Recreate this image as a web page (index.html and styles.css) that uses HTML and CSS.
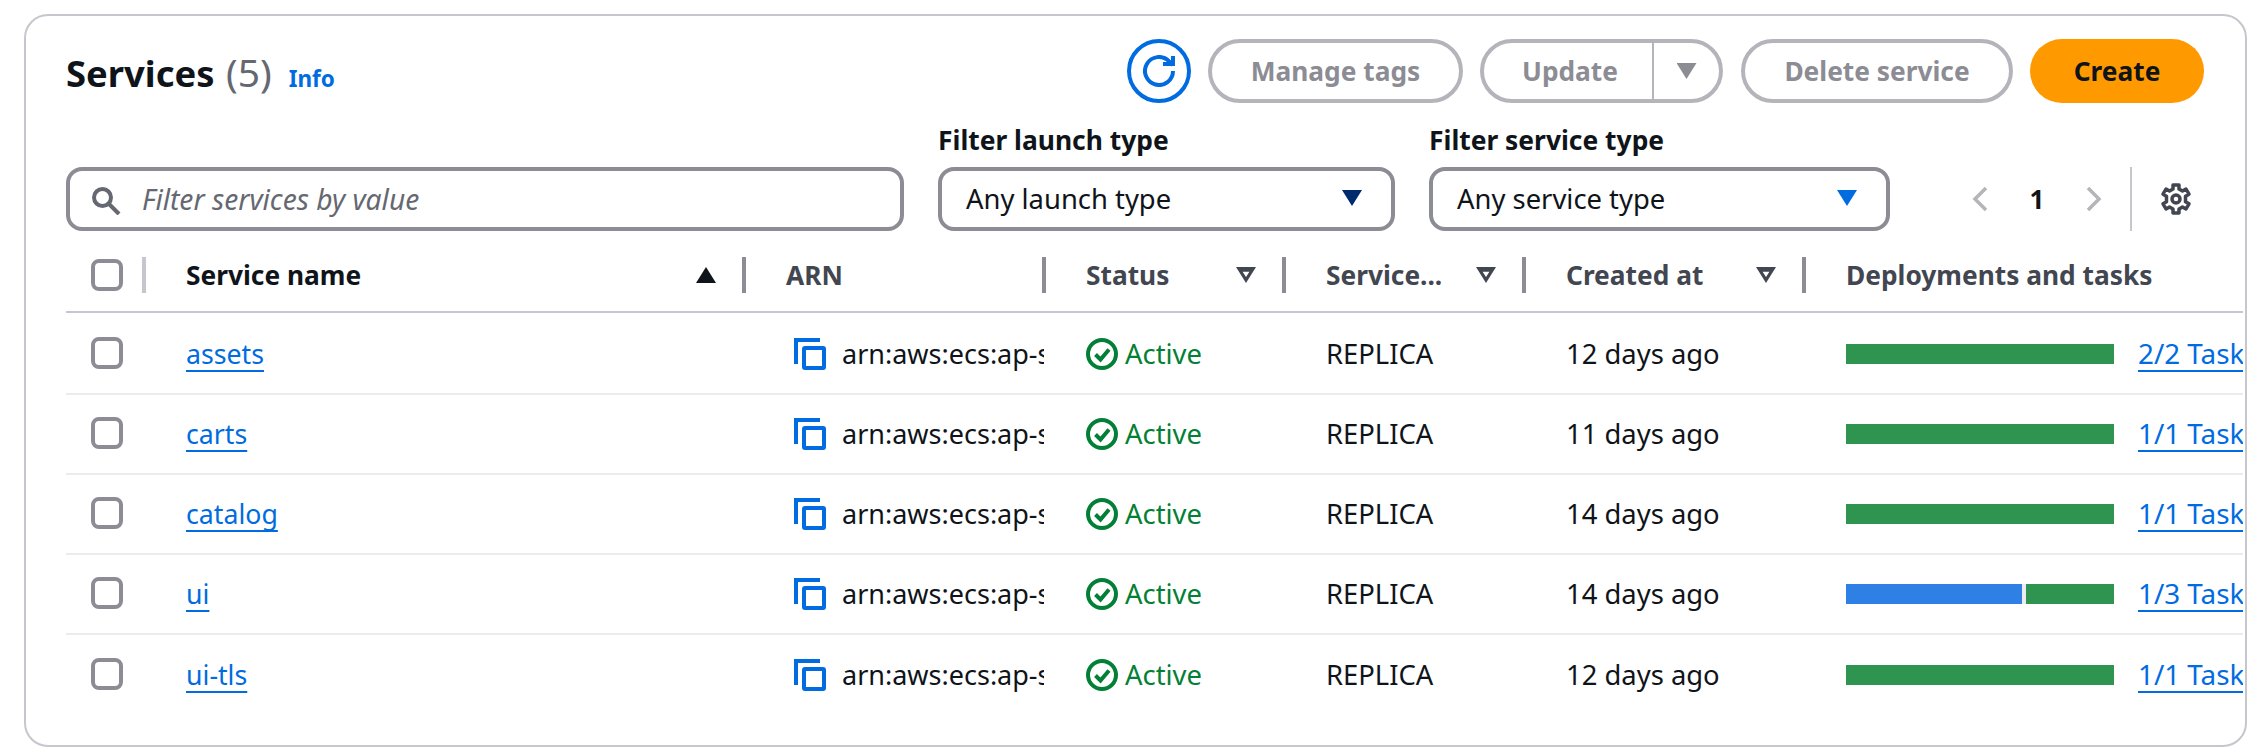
FILE: index.html
```html
<!DOCTYPE html>
<html lang="en">
<head>
<meta charset="utf-8">
<title>Services</title>
<link rel="stylesheet" href="styles.css">
</head>
<body>
<main class="card">
  <header class="top">
    <div class="title"><h1>Services <span class="count">(5)</span></h1><a class="info">Info</a></div>
    <div class="actions">
      <button class="refresh" aria-label="Refresh"><svg viewBox="0 0 32 32" width="32" height="32"><path d="M20 9h10V1M30 16a14 14 0 1 1-4.100-9.900L30 10"/></svg></button>
      <button class="btn btn-tags">Manage tags</button>
      <div class="split"><button class="split-main">Update</button><button class="split-caret"><span class="tri-down grey"></span></button></div>
      <button class="btn btn-delete">Delete service</button>
      <button class="create">Create</button>
    </div>
  </header>
  <section class="filters">
    <div class="search">
      <svg viewBox="0 0 32 32" width="32" height="32"><circle cx="12.500" cy="14.500" r="8.500"/><path d="M19 21l10 10"/></svg>
      <span>Filter services by value</span>
    </div>
    <div class="field launch"><label>Filter launch type</label><div class="select"><span>Any launch type</span><span class="tri-down navy"></span></div></div>
    <div class="field service"><label>Filter service type</label><div class="select"><span>Any service type</span><span class="tri-down blue"></span></div></div>
    <div class="pager">
      <svg class="chev" viewBox="0 0 18 26" width="18" height="26"><path d="M15 2L4 13l11 11"/></svg>
      <span class="page">1</span>
      <svg class="chev" viewBox="0 0 18 26" width="18" height="26"><path d="M3 2l11 11L3 24"/></svg>
      <span class="pager-sep"></span>
      <svg class="gear" viewBox="0 0 32 32" width="32" height="32"><circle cx="16" cy="16" r="4"/><path d="M13 2h6v4l3.500 2 3.500-2 3 5.200-3.500 2v5.600l3.500 2-3 5.200-3.500-2-3.500 2v4h-6v-4l-3.500-2-3.500 2-3-5.200 3.500-2v-5.600l-3.500-2L6 6l3.500 2L13 6z"/></svg>
    </div>
  </section>
  <div class="table">
    <div class="row head">
      <div class="cell c1"><span class="check"></span></div>
      <div class="cell c2"><span class="h-dark">Service name</span><span class="tri-up"></span></div>
      <div class="cell c3"><span>ARN</span></div>
      <div class="cell c4"><span>Status</span><span class="tri-outline"></span></div>
      <div class="cell c5"><span>Service...</span><span class="tri-outline"></span></div>
      <div class="cell c6"><span>Created at</span><span class="tri-outline"></span></div>
      <div class="cell c7"><span>Deployments and tasks</span></div>
    </div>
    <div class="row">
      <div class="cell c1"><span class="check"></span></div>
      <div class="cell c2"><a class="link">assets</a></div>
      <div class="cell c3"><svg class="copy" viewBox="0 0 32 32" width="32" height="32"><path d="M2 26V2h24"/><rect x="10" y="10" width="20" height="20" rx="1"/></svg><span class="arn">arn:aws:ecs:ap-southeast-1</span></div>
      <div class="cell c4"><svg class="ok" viewBox="0 0 32 32" width="32" height="32"><circle cx="16" cy="16" r="14"/><path d="M9.500 16.500l5 5 8.500-10"/></svg><span class="active">Active</span></div>
      <div class="cell c5">REPLICA</div>
      <div class="cell c6">12 days ago</div>
      <div class="cell c7"><div class="bar"><i class="seg-green" style="width:100%"></i></div><a class="link">2/2 Tasks running</a></div>
    </div>
    <div class="row">
      <div class="cell c1"><span class="check"></span></div>
      <div class="cell c2"><a class="link">carts</a></div>
      <div class="cell c3"><svg class="copy" viewBox="0 0 32 32" width="32" height="32"><path d="M2 26V2h24"/><rect x="10" y="10" width="20" height="20" rx="1"/></svg><span class="arn">arn:aws:ecs:ap-southeast-1</span></div>
      <div class="cell c4"><svg class="ok" viewBox="0 0 32 32" width="32" height="32"><circle cx="16" cy="16" r="14"/><path d="M9.500 16.500l5 5 8.500-10"/></svg><span class="active">Active</span></div>
      <div class="cell c5">REPLICA</div>
      <div class="cell c6">11 days ago</div>
      <div class="cell c7"><div class="bar"><i class="seg-green" style="width:100%"></i></div><a class="link">1/1 Tasks running</a></div>
    </div>
    <div class="row">
      <div class="cell c1"><span class="check"></span></div>
      <div class="cell c2"><a class="link">catalog</a></div>
      <div class="cell c3"><svg class="copy" viewBox="0 0 32 32" width="32" height="32"><path d="M2 26V2h24"/><rect x="10" y="10" width="20" height="20" rx="1"/></svg><span class="arn">arn:aws:ecs:ap-southeast-1</span></div>
      <div class="cell c4"><svg class="ok" viewBox="0 0 32 32" width="32" height="32"><circle cx="16" cy="16" r="14"/><path d="M9.500 16.500l5 5 8.500-10"/></svg><span class="active">Active</span></div>
      <div class="cell c5">REPLICA</div>
      <div class="cell c6">14 days ago</div>
      <div class="cell c7"><div class="bar"><i class="seg-green" style="width:100%"></i></div><a class="link">1/1 Tasks running</a></div>
    </div>
    <div class="row">
      <div class="cell c1"><span class="check"></span></div>
      <div class="cell c2"><a class="link">ui</a></div>
      <div class="cell c3"><svg class="copy" viewBox="0 0 32 32" width="32" height="32"><path d="M2 26V2h24"/><rect x="10" y="10" width="20" height="20" rx="1"/></svg><span class="arn">arn:aws:ecs:ap-southeast-1</span></div>
      <div class="cell c4"><svg class="ok" viewBox="0 0 32 32" width="32" height="32"><circle cx="16" cy="16" r="14"/><path d="M9.500 16.500l5 5 8.500-10"/></svg><span class="active">Active</span></div>
      <div class="cell c5">REPLICA</div>
      <div class="cell c6">14 days ago</div>
      <div class="cell c7"><div class="bar"><i class="seg-blue" style="width:176px"></i><i class="seg-gap"></i><i class="seg-green" style="width:88px"></i></div><a class="link">1/3 Tasks running</a></div>
    </div>
    <div class="row last">
      <div class="cell c1"><span class="check"></span></div>
      <div class="cell c2"><a class="link">ui-tls</a></div>
      <div class="cell c3"><svg class="copy" viewBox="0 0 32 32" width="32" height="32"><path d="M2 26V2h24"/><rect x="10" y="10" width="20" height="20" rx="1"/></svg><span class="arn">arn:aws:ecs:ap-southeast-1</span></div>
      <div class="cell c4"><svg class="ok" viewBox="0 0 32 32" width="32" height="32"><circle cx="16" cy="16" r="14"/><path d="M9.500 16.500l5 5 8.500-10"/></svg><span class="active">Active</span></div>
      <div class="cell c5">REPLICA</div>
      <div class="cell c6">12 days ago</div>
      <div class="cell c7"><div class="bar"><i class="seg-green" style="width:100%"></i></div><a class="link">1/1 Tasks running</a></div>
    </div>
  </div>
</main>
</body>
</html>
```
FILE: styles.css
```css
* { box-sizing: border-box; }
html, body { margin: 0; background: #fff; }
body { width: 2262px; height: 756px; overflow: hidden; font-family: "Noto Sans", sans-serif; font-size: 27.4px; color: #0f141a; }
.card { margin: 14px 0 0 24px; width: 2223px; height: 733px; border: 2px solid #c6c6cd; border-radius: 24px; padding: 23px 2px 0 40px; overflow: hidden; }
.top { display: flex; justify-content: space-between; align-items: center; height: 64px; padding-right: 39px; }
.title { display: flex; align-items: baseline; gap: 17px; padding-top: 2px; }
h1 { margin: 0; font-size: 36.4px; font-weight: 700; line-height: 44px; word-spacing: 2px; }
.count { font-weight: 400; font-size: 39px; color: #656871; }
.info { font-size: 22.5px; font-weight: 700; color: #006ce0; }
.actions { display: flex; align-items: center; }
button { font: inherit; font-size: 26.3px; font-weight: 700; background: #fff; padding: 0; }
.refresh { width: 64px; height: 64px; border-radius: 50%; border: 4px solid #006ce0; display: flex; align-items: center; justify-content: center; margin-right: 17px; }
.refresh path { fill: none; stroke: #006ce0; stroke-width: 4; }
.btn { height: 64px; border: 4px solid #b4b4bb; border-radius: 32px; color: #8c8c94; }
.btn-tags { width: 255px; margin-right: 17px; }
.btn-delete { width: 272px; margin-right: 17px; }
.split { display: flex; width: 243px; height: 64px; border: 4px solid #b4b4bb; border-radius: 32px; margin-right: 18px; }
.split-main { width: 170px; border: 0; border-right: 2px solid #b4b4bb; background: none; color: #8c8c94; padding-left: 4px; }
.split-caret { flex: 1; border: 0; background: none; display: flex; align-items: center; justify-content: center; }
.create { width: 174px; height: 64px; border: 0; border-radius: 32px; background: #ff9900; color: #0f141a; }
.filters { display: flex; align-items: flex-end; margin-top: 19px; }
.search { width: 838px; height: 64px; border: 4px solid #8c8c94; border-radius: 16px; display: flex; align-items: center; padding-left: 20px; gap: 20px; font-style: italic; font-size: 28.2px; color: #656871; margin-right: 34px; }
.search svg { fill: none; stroke: #656871; stroke-width: 4; flex: none; }
.field label { display: block; font-weight: 700; font-size: 26.4px; line-height: 36px; margin-bottom: 9px; }
.launch { width: 457px; margin-right: 34px; }
.service { width: 461px; margin-right: 81px; }
.select { height: 64px; border: 4px solid #8c8c94; border-radius: 16px; display: flex; align-items: center; justify-content: space-between; padding: 0 29px 2px 24px; }
.tri-down { width: 20px; height: 16px; clip-path: polygon(0 0, 100% 0, 50% 100%); flex: none; }
.navy { background: #002a6d; }
.blue { background: #006ce0; }
.grey { background: #8c8c94; }
.pager { display: flex; align-items: center; height: 64px; }
.chev { fill: none; stroke: #b4b4bb; stroke-width: 3.500; }
.page { width: 96px; text-align: center; font-weight: 700; font-size: 26px; }
.pager-sep { width: 2px; height: 64px; background: #c6c6cd; margin-left: 27px; margin-right: 28px; }
.gear { fill: none; stroke: #424650; stroke-width: 3.500; stroke-linejoin: round; }
.table { margin-top: 26px; width: 2177px; overflow: hidden; }
.row { display: flex; height: 80px; border-bottom: 2px solid #ebebf0; align-items: center; }
.row.last { border-bottom: 0; }
.row.head { height: 56px; margin-bottom: 2px; border-bottom: 2px solid #c6c6cd; align-items: flex-start; font-size: 26.3px; font-weight: 700; color: #424650; }
.cell { display: flex; align-items: center; flex: none; padding-left: 40px; white-space: nowrap; overflow: hidden; }
.head .cell { height: 36px; justify-content: space-between; border-right: 4px solid #8c8c94; padding-right: 26px; }
.head .c1 { border-right-color: #c6c6cd; }
.head .c3 { padding-right: 0; }
.head .c7 { border-right: 0; }
.c1 { width: 80px; padding-left: 25px; }
.c2 { width: 600px; }
.c3 { width: 300px; }
.c4 { width: 240px; }
.c5 { width: 240px; }
.c6 { width: 280px; }
.c7 { width: 437px; }
.row:not(.head) .c3 { padding-left: 48px; padding-right: 2px; }
.row:not(.head) .c2, .row:not(.head) .c5, .row:not(.head) .c6 { padding-bottom: 2px; }
.h-dark { color: #0f141a; }
.check { width: 32px; height: 32px; border: 4px solid #8c8c94; border-radius: 8px; flex: none; margin-bottom: 2px; }
.head .check { margin-bottom: 0; }
.tri-up { width: 20px; height: 16px; background: #0f141a; clip-path: polygon(50% 0, 100% 100%, 0 100%); flex: none; }
.tri-outline { width: 20px; height: 16px; flex: none; clip-path: polygon(0 0, 100% 0, 50% 100%, 0 0, 33% 30%, 50% 62%, 67% 30%, 33% 30%); background: #424650; }
.link { color: #006ce0; font-size: 26.7px; text-decoration: underline; text-underline-offset: 6px; text-decoration-thickness: 2px; text-decoration-skip-ink: none; }
.c7 .link { margin-bottom: 2px; font-size: 27.8px; }
.copy { flex: none; margin-right: 16px; fill: none; stroke: #006ce0; stroke-width: 4; }
.arn { overflow: hidden; font-size: 27px; margin-bottom: 2px; }
.ok { flex: none; margin-right: 7px; fill: none; stroke: #037f36; stroke-width: 4; }
.active { color: #037f36; margin-bottom: 2px; }
.bar { width: 268px; height: 20px; display: flex; flex: none; margin-right: 24px; }
.bar i { display: block; height: 20px; }
.seg-green { background: #2e9450; }
.seg-blue { background: #2f80e4; }
.seg-gap { width: 4px; background: #ebebf0; }
```
